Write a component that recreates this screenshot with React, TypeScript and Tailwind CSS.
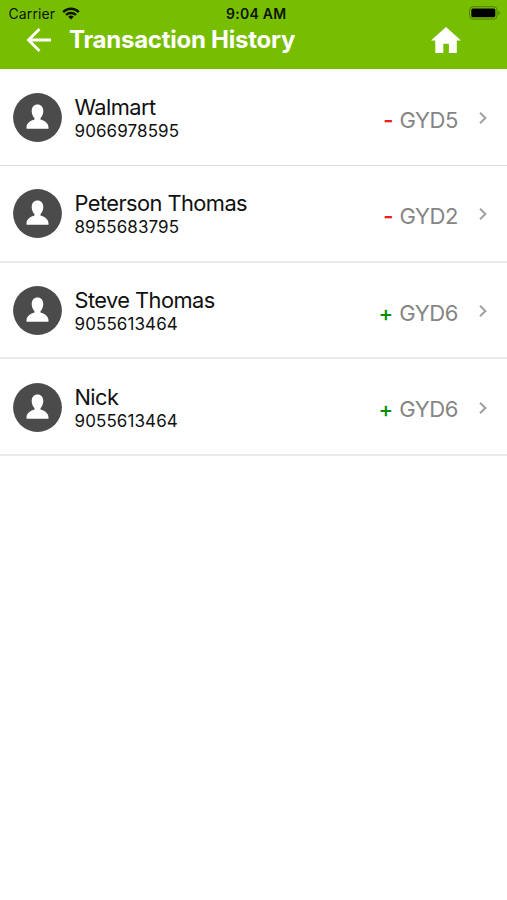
const transactions = [
  { name: "Walmart", phone: "9066978595", sign: "-", amount: "GYD5" },
  { name: "Peterson Thomas", phone: "8955683795", sign: "-", amount: "GYD2" },
  { name: "Steve Thomas", phone: "9055613464", sign: "+", amount: "GYD6" },
  { name: "Nick", phone: "9055613464", sign: "+", amount: "GYD6" },
];

const WifiIcon = () => (
  <svg className="ml-[7px] h-[13px] w-[18px]" viewBox="0 0 18 13" fill="none" stroke="#0b1400" strokeWidth="2.5">
    <path d="M1.2 5.1a11 11 0 0 1 15.6 0" />
    <path d="M4 8a7 7 0 0 1 10 0" />
    <path d="M9 12.6 6.2 9.8a4 4 0 0 1 5.6 0Z" fill="#0b1400" stroke="none" />
  </svg>
);

const BatteryIcon = () => (
  <svg className="h-[14px] w-[32px]" viewBox="0 0 32 14">
    <rect x="0.5" y="0.7" width="27.6" height="12.4" rx="3.5" fill="none" stroke="#4f7d00" />
    <rect x="2.3" y="2.5" width="24" height="8.8" rx="1.6" fill="#000" />
    <path d="M29.5 4.8c1.8.6 1.8 3.6 0 4.2Z" fill="#4f7d00" />
  </svg>
);

const BackIcon = () => (
  <svg className="h-6 w-[26px]" viewBox="0 0 26 24" fill="none" stroke="#fff" strokeWidth="2.8">
    <path d="M25 12H3M13.5 1 2.5 12l11 11" />
  </svg>
);

const HomeIcon = () => (
  <svg className="mb-px h-[26px] w-[30px]" viewBox="0 0 30 26" fill="#fff">
    <path d="M15 0 0 13.4h4.3V26h8v-9.3h5.6V26h7.9V13.4H30Z" />
  </svg>
);

const Avatar = () => (
  <svg className="h-[49px] w-[49px] shrink-0" viewBox="0 0 49 49">
    <circle cx="24.5" cy="24.5" r="24.4" fill="#4b4b4b" />
    <path
      d="M24.5 11.4c3.5 0 5.8 2.6 5.8 6.6 0 2.9-1.2 5.6-2.8 7.2v1.4c3.8 1.2 8 3.2 8 8v1.2h-22v-1.2c0-4.8 4.2-6.8 8-8v-1.4c-1.6-1.6-2.8-4.3-2.8-7.2 0-4 2.3-6.6 5.8-6.6Z"
      fill="#fff"
    />
  </svg>
);

const ChevronIcon = () => (
  <svg className="h-3 w-2" viewBox="0 0 8 12" fill="none" stroke="#a0a0a0" strokeWidth="2">
    <path d="m1 .8 5.4 5.2L1 11.2" />
  </svg>
);

const Header = () => (
  <header className="h-[69px] bg-[#78be00]">
    <div className="grid h-[27px] grid-cols-3 items-center pb-px pl-[8.5px] pr-[6px] text-[#0b1400]">
      <div className="flex items-center">
        <span className="text-[14px] tracking-[0.1px]">Carrier</span>
        <WifiIcon />
      </div>
      <span className="pl-[3px] text-center text-[14px] font-semibold tracking-[0.25px]">9:04 AM</span>
      <div className="flex justify-end">
        <BatteryIcon />
      </div>
    </div>
    <div className="flex h-[26px] items-center pl-[26px] pr-[46px]">
      <BackIcon />
      <h1 className="mb-px ml-[17px] flex-1 text-[24px] leading-[26px] font-bold tracking-[-0.25px] text-white">
        Transaction History
      </h1>
      <HomeIcon />
    </div>
  </header>
);

const App = () => (
  <div className="min-h-screen bg-white font-['Inter',sans-serif] text-[#111]">
    <Header />
    <ul>
      {transactions.map((item, index) => (
        <li
          key={index}
          className="flex h-[96.8px] items-center border-b-2 border-[#ebebeb] pt-[1.5px] pr-5 pl-[13px] first:border-b first:border-[#dedede]"
        >
          <Avatar />
          <div className="ml-[12.5px] flex-1">
            <div className="-mt-px mb-px text-[21.8px] leading-[26px] tracking-[-0.55px]">{item.name}</div>
            <div className="text-[17px] leading-[20px] tracking-[0.1px]">{item.phone}</div>
          </div>
          <div className="mt-[3.8px] flex items-center text-[22px] leading-[26px]">
            <span className={item.sign === "-" ? "mr-[6px] font-semibold text-[#e8201f]" : "mr-[6px] font-medium text-[#0b8f0b]"}>
              {item.sign}
            </span>
            <span className="tracking-[-0.4px] text-[#858585]">{item.amount}</span>
          </div>
          <div className="ml-[21px]">
            <ChevronIcon />
          </div>
        </li>
      ))}
    </ul>
  </div>
);

export default App;
